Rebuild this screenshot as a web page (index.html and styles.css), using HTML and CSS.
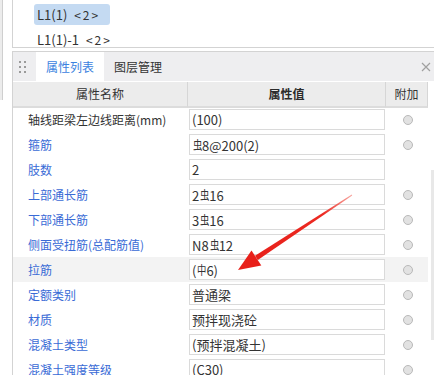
FILE: index.html
```html
<!DOCTYPE html>
<html lang="zh">
<head>
<meta charset="utf-8">
<link rel="stylesheet" href="styles.css">
</head>
<body>
<div class="app">
  <div class="strip"></div>
  <div class="main">
    <div class="tree">
      <div class="node sel">L1(1) <span class="ang">&lt;2&gt;</span></div>
      <div class="node">L1(1)-1 <span class="ang">&lt;2&gt;</span></div>
    </div>
    <div class="panel">
      <div class="tabbar">
        <svg class="grip" width="8" height="14" viewBox="0 0 8 14"><g fill="#9a9a9a"><rect x="0" y="0" width="2" height="2"/><rect x="5" y="0" width="2" height="2"/><rect x="0" y="5" width="2" height="2"/><rect x="5" y="5" width="2" height="2"/><rect x="0" y="10" width="2" height="2"/><rect x="5" y="10" width="2" height="2"/></g></svg>
        <div class="tab active">属性列表</div>
        <div class="tab">图层管理</div>
        <svg class="close" width="10" height="10" viewBox="0 0 10 10"><path d="M1 1L9 9M9 1L1 9" stroke="#a0a0a0" stroke-width="1.2"/></svg>
      </div>
      <div class="table">
        <div class="th">属性名称</div>
        <div class="th strong">属性值</div>
        <div class="th">附加</div>

        <div class="name">轴线距梁左边线距离(mm)</div>
        <div class="val"><div class="box">(100)</div></div>
        <div class="add"><span class="radio"></span></div>

        <div class="name link">箍筋</div>
        <div class="val"><div class="box"><span class="g3">虫</span>8@200(2)</div></div>
        <div class="add"><span class="radio"></span></div>

        <div class="name link">肢数</div>
        <div class="val"><div class="box">2</div></div>
        <div class="add"></div>

        <div class="name link">上部通长筋</div>
        <div class="val"><div class="box">2<span class="g3">虫</span>16</div></div>
        <div class="add"><span class="radio"></span></div>

        <div class="name link">下部通长筋</div>
        <div class="val"><div class="box">3<span class="g3">虫</span>16</div></div>
        <div class="add"><span class="radio"></span></div>

        <div class="name link">侧面受扭筋(总配筋值)</div>
        <div class="val"><div class="box">N8<span class="g3">虫</span>12</div></div>
        <div class="add"><span class="radio"></span></div>

        <div class="name link hl">拉筋</div>
        <div class="val hl"><div class="box">(<span class="g3">中</span>6)</div></div>
        <div class="add hl"><span class="radio"></span></div>

        <div class="name link">定额类别</div>
        <div class="val"><div class="box">普通梁</div></div>
        <div class="add"><span class="radio"></span></div>

        <div class="name link">材质</div>
        <div class="val"><div class="box">预拌现浇砼</div></div>
        <div class="add"><span class="radio"></span></div>

        <div class="name link">混凝土类型</div>
        <div class="val"><div class="box">(预拌混凝土)</div></div>
        <div class="add"><span class="radio"></span></div>

        <div class="name link">混凝土强度等级</div>
        <div class="val"><div class="box">(C30)</div></div>
        <div class="add"><span class="radio"></span></div>
      </div>
    </div>
  </div>
  <div class="thumb"></div>
</div>
<svg class="arrow" width="434" height="375" viewBox="0 0 434 375">
  <defs>
    <linearGradient id="ag" x1="352" y1="195" x2="256" y2="258" gradientUnits="userSpaceOnUse">
      <stop offset="0" stop-color="#f04a3e" stop-opacity="0.5"/>
      <stop offset="0.3" stop-color="#ec2a22"/>
      <stop offset="1" stop-color="#e8201a"/>
    </linearGradient>
  </defs>
  <polygon points="352.2,195.4 351.8,194.6 255.0,255.8 257.8,260.0" fill="url(#ag)"/>
  <polygon points="238,270 251.5,250.4 261.3,265.4" fill="#e8201a"/>
</svg>
</body>
</html>
```

FILE: styles.css
```css
html, body {
  margin: 0;
  padding: 0;
  background: #ffffff;
}
body {
  width: 434px;
  height: 375px;
  overflow: hidden;
  position: relative;
  font-family: "Noto Sans CJK SC", "Noto Sans", sans-serif;
  font-size: 12px;
  color: #333333;
}
.app {
  display: flex;
  height: 375px;
}
.strip {
  width: 2px;
  height: 100px;
  background: #ececec;
  border-right: 1px solid #cfcfcf;
  flex: none;
}
.main {
  margin-left: 9px;
  width: 422px;
  flex: none;
  display: flex;
  flex-direction: column;
}
.tree {
  height: 48px;
  border-left: 1px solid #d3d3d3;
  border-bottom: 1px solid #d3d3d3;
  padding-top: 4px;
  box-sizing: border-box;
  width: 422px;
}
.node {
  height: 21px;
  line-height: 21px;
  margin-left: 21px;
  padding: 0 3px;
  border-radius: 3px;
  color: #333333;
  white-space: nowrap;
  font-size: 13px;
  display: block;
  width: max-content;
}
.node + .node {
  margin-top: 4px;
}
.node.sel {
  background: #c4daf2;
  width: 70px;
}
.ang {
  margin-left: 4px;
  font-size: 12px;
  letter-spacing: 2px;
}
.panel {
  margin-top: 3px;
  border-top: 1px solid #d3d3d3;
  border-left: 1px solid #d3d3d3;
  flex: 1;
}
.tabbar {
  height: 29px;
  background: #eeeef0;
  display: flex;
  align-items: stretch;
  position: relative;
  width: 422px;
}
.grip {
  margin: 9px 0 0 6px;
  flex: none;
}
.tab {
  line-height: 29px;
  padding: 0 10px;
  color: #333333;
  white-space: nowrap;
  font-size: 12px;
}
.tab.active {
  margin-left: 9px;
  padding: 0 10px;
  background: #ffffff;
  color: #3b82e0;
}
.close {
  margin: 10px 4px 0 auto;
}
.table {
  display: grid;
  grid-template-columns: 175px 198px 42px;
  grid-auto-rows: 25px;
  width: 415px;
  border-top: 1px solid #ffffff;
}
.th {
  height: 24px;
  line-height: 24px;
  text-align: center;
  background: #ececec;
  border-right: 1px solid #d6d6d6;
  border-bottom: 2px solid #dcdcdc;
  color: #333333;
  font-size: 12px;
}
.th.strong {
  font-weight: 600;
  color: #2b2b2b;
}
.name {
  padding-left: 15px;
  line-height: 25px;
  white-space: nowrap;
  color: #333333;
}
.name.link {
  color: #3a6bd6;
}
.val {
  padding: 2px 1px 2px 1px;
}
.box {
  height: 21px;
  box-sizing: border-box;
  border: 1px solid #dadada;
  background: #ffffff;
  line-height: 19px;
  padding-left: 2px;
  white-space: nowrap;
  color: #333333;
  font-size: 13px;
}
.g3 {
  display: inline-block;
  font-size: 12px;
  transform: scaleX(0.78);
  width: 10px;
  text-align: center;
  vertical-align: 1px;
}
.add {
  display: flex;
  align-items: center;
  justify-content: center;
}
.radio {
  width: 8px;
  height: 8px;
  border-radius: 50%;
  background: #e2e2e2;
  border: 1px solid #b9b9b9;
  margin-left: 1px;
}
.hl {
  background: #f3f3f3;
}
.thumb {
  position: absolute;
  left: 431px;
  top: 170px;
  width: 3px;
  height: 170px;
  background: #e8e8e8;
}
.arrow {
  position: absolute;
  left: 0;
  top: 0;
  pointer-events: none;
}
```
